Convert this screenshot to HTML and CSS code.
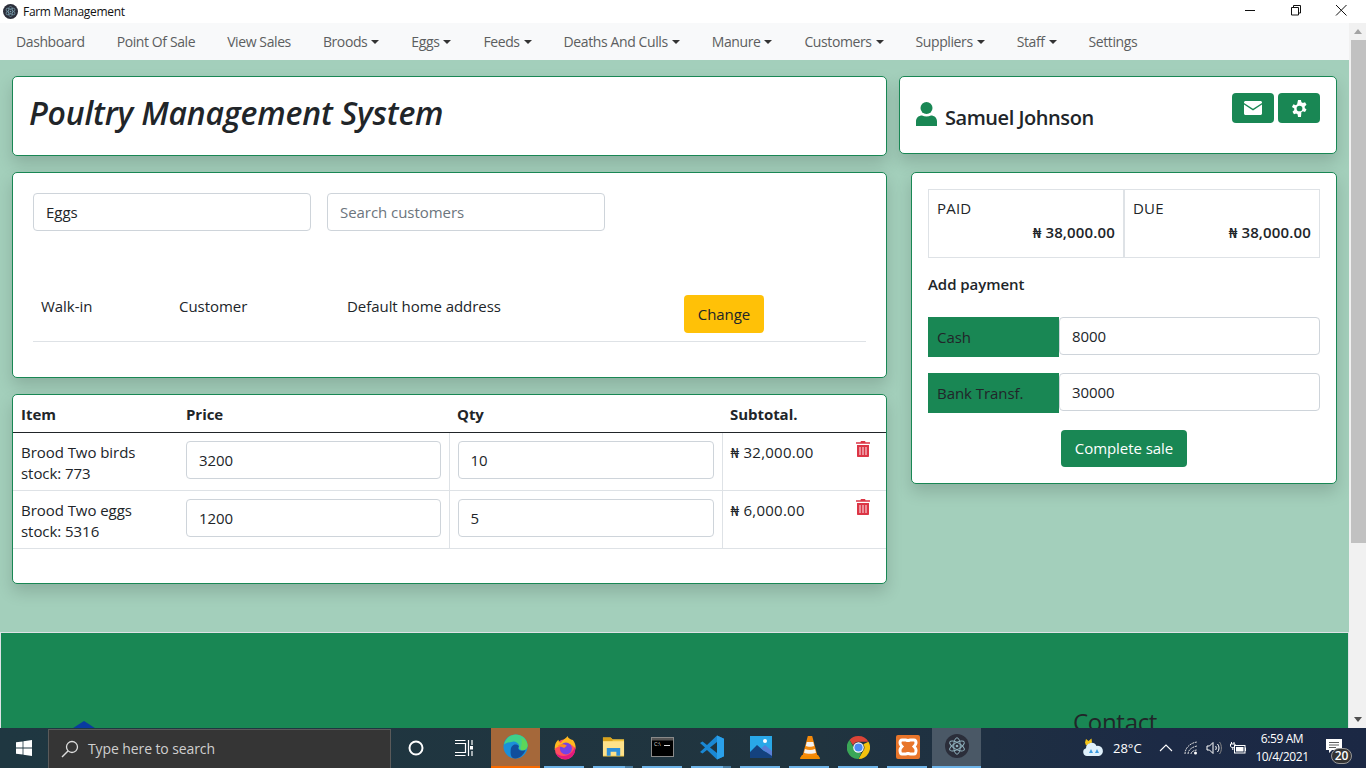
FILE: index.html
```html
<!DOCTYPE html>
<html lang="en">
<head>
    <meta charset="UTF-8">
    <meta name="viewport" content="width=device-width, initial-scale=1.0">
    <title>Farm Management</title>
    <link rel="stylesheet" href="styles.css">
</head>
<body>

    <!-- Window title bar -->
    <div class="titlebar">
        <div class="titlebar-left">
            <svg class="app-icon" viewBox="0 0 32 32">
                <circle cx="16" cy="16" r="16" fill="#2b2e3a"/>
                <g fill="none" stroke="#7fa8b8" stroke-width="1.3">
                    <ellipse cx="16" cy="16" rx="11" ry="4.4" transform="rotate(30 16 16)"/>
                    <ellipse cx="16" cy="16" rx="11" ry="4.4" transform="rotate(90 16 16)"/>
                    <ellipse cx="16" cy="16" rx="11" ry="4.4" transform="rotate(150 16 16)"/>
                </g>
                <circle cx="16" cy="16" r="1.8" fill="#7fa8b8"/>
            </svg>
            <span>Farm Management</span>
        </div>
        <div class="window-controls">
            <svg viewBox="0 0 46 23"><path d="M17 10.500h10" stroke="#111" fill="none"/></svg>
            <svg viewBox="0 0 46 23"><path d="M17.500 7.500h7v7.500h-7zM19.500 7.500v-2h7v7.500h-2" stroke="#111" fill="none"/></svg>
            <svg viewBox="0 0 46 23"><path d="M16 5l10.500 10.500M26.500 5L16 15.500" stroke="#111" fill="none"/></svg>
        </div>
    </div>

    <div class="window-body">
        <div class="page">

            <!-- Navbar -->
            <nav class="navbar">
                <a>Dashboard</a>
                <a>Point Of Sale</a>
                <a>View Sales</a>
                <a class="dropdown">Broods</a>
                <a class="dropdown">Eggs</a>
                <a class="dropdown">Feeds</a>
                <a class="dropdown">Deaths And Culls</a>
                <a class="dropdown">Manure</a>
                <a class="dropdown">Customers</a>
                <a class="dropdown">Suppliers</a>
                <a class="dropdown">Staff</a>
                <a>Settings</a>
            </nav>

            <main class="content">
                <div class="col-left">
                    <div class="card title-card">
                        <h1>Poultry Management System</h1>
                    </div>

                    <!-- Customer -->
                    <div class="card customer-card">
                        <div class="search-row">
                            <input type="text" class="form-control" value="Eggs">
                            <input type="text" class="form-control" placeholder="Search customers">
                        </div>
                        <table class="customer-table">
                            <tr>
                                <td class="c-first">Walk-in</td>
                                <td class="c-last">Customer</td>
                                <td class="c-address">Default home address</td>
                                <td class="c-action"><button class="btn btn-warning">Change</button></td>
                            </tr>
                        </table>
                    </div>

                    <!-- Sale items -->
                    <div class="card items-card">
                        <table class="items-table">
                            <thead>
                                <tr>
                                    <th class="col-item">Item</th>
                                    <th class="col-price">Price</th>
                                    <th class="col-qty">Qty</th>
                                    <th>Subtotal.</th>
                                </tr>
                            </thead>
                            <tbody>
                                <tr>
                                    <td>Brood Two birds<br>stock: 773</td>
                                    <td class="cell-input"><input type="text" class="form-control" value="3200"></td>
                                    <td class="cell-input"><input type="text" class="form-control" value="10"></td>
                                    <td>
                                        <div class="subtotal">
                                            <span>₦ 32,000.00</span>
                                            <svg class="trash" viewBox="0 0 14 16"><use href="#trash-icon"/></svg>
                                        </div>
                                    </td>
                                </tr>
                                <tr>
                                    <td>Brood Two eggs<br>stock: 5316</td>
                                    <td class="cell-input"><input type="text" class="form-control" value="1200"></td>
                                    <td class="cell-input"><input type="text" class="form-control" value="5"></td>
                                    <td>
                                        <div class="subtotal">
                                            <span>₦ 6,000.00</span>
                                            <svg class="trash" viewBox="0 0 14 16"><use href="#trash-icon"/></svg>
                                        </div>
                                    </td>
                                </tr>
                            </tbody>
                        </table>
                    </div>
                </div>

                <div class="col-right">
                    <div class="card profile-card">
                        <div class="profile-name">
                            <svg class="person" viewBox="0 0 21 24">
                                <circle cx="10.500" cy="6" r="6"/>
                                <path d="M0 24v-4.500C0 15.500 3 13.500 6 13.500c1.300.6 2.900 1 4.500 1s3.200-.4 4.500-1c3 0 6 2 6 6V24z"/>
                            </svg>
                            <span>Samuel Johnson</span>
                        </div>
                        <div class="profile-actions">
                            <button class="btn btn-success btn-icon">
                                <svg viewBox="0 0 18 14" width="18" height="14">
                                    <path fill="#fff" d="M1.500 0h15c.8 0 1.500.7 1.500 1.500v.4L9 7.800 0 1.900v-.4C0 .7.700 0 1.500 0z"/>
                                    <path fill="#fff" d="M0 3.500l9 5.900 9-5.900v9c0 .8-.7 1.500-1.500 1.500h-15C.700 14 0 13.300 0 12.500z"/>
                                </svg>
                            </button>
                            <button class="btn btn-success btn-icon">
                                <svg viewBox="0 0 16 16" width="17" height="17">
                                    <path fill="#fff" fill-rule="evenodd" d="M6.600 0h2.800l.4 2.200c.5.200.9.400 1.300.7l2.100-.8 1.400 2.400-1.700 1.500c.1.500.1 1 0 1.500v0l1.700 1.500-1.400 2.400-2.100-.8c-.4.300-.8.500-1.300.7L9.400 16H6.600l-.4-2.700c-.5-.2-.9-.4-1.300-.7l-2.100.8-1.400-2.400 1.700-1.500c-.1-.5-.1-1 0-1.500L.9 6.500l1.400-2.400 2.100.8c.4-.3.8-.5 1.300-.7zM8 5.300a2.700 2.700 0 1 0 0 5.400 2.700 2.700 0 0 0 0-5.400z"/>
                                </svg>
                            </button>
                        </div>
                    </div>

                    <!-- Payment -->
                    <div class="card payment-card">
                        <table class="totals-table">
                            <tr>
                                <td>
                                    <div class="totals-label">PAID</div>
                                    <div class="totals-amount">₦ 38,000.00</div>
                                </td>
                                <td>
                                    <div class="totals-label">DUE</div>
                                    <div class="totals-amount">₦ 38,000.00</div>
                                </td>
                            </tr>
                        </table>
                        <div class="add-payment">Add payment</div>
                        <div class="input-group">
                            <span class="input-label">Cash</span>
                            <input type="text" class="form-control" value="8000">
                        </div>
                        <div class="input-group">
                            <span class="input-label">Bank Transf.</span>
                            <input type="text" class="form-control" value="30000">
                        </div>
                        <div class="complete-row">
                            <button class="btn btn-success">Complete sale</button>
                        </div>
                    </div>
                </div>
            </main>

            <!-- Footer -->
            <footer class="footer">
                <svg class="footer-logo" viewBox="0 0 28 20"><path d="M14 0L28 9v11H0V9z" fill="#0a3aa0"/></svg>
                <h3>Contact</h3>
            </footer>
        </div>

        <!-- Scrollbar -->
        <div class="scrollbar">
            <div class="scroll-btn"><span class="arrow-up"></span></div>
            <div class="scroll-track"><div class="scroll-thumb"></div></div>
            <div class="scroll-btn"><span class="arrow-down"></span></div>
        </div>
    </div>

    <!-- Windows taskbar -->
    <div class="taskbar">
        <div class="start-btn">
            <svg viewBox="0 0 16 16" width="16" height="16"><path fill="#fff" d="M0 2.300l6.600-.9v6.200H0zM7.400 1.300L16 0v7.600H7.400zM0 8.400h6.600v6.200L0 13.700zM7.400 8.400H16V16l-8.600-1.300z"/></svg>
        </div>
        <div class="search-box">
            <svg viewBox="0 0 18 18" width="18" height="18"><circle cx="11" cy="7" r="5.500" fill="none" stroke="#ddd" stroke-width="1.300"/><path d="M7 11l-6 6" stroke="#ddd" stroke-width="1.500"/></svg>
            <span>Type here to search</span>
        </div>
        <div class="task-btn">
            <svg viewBox="0 0 18 18" width="18" height="18"><circle cx="9" cy="9" r="6.500" fill="none" stroke="#fff" stroke-width="2"/></svg>
        </div>
        <div class="task-btn task-view">
            <svg viewBox="0 0 18 18" width="18" height="18"><path d="M0 4.500h10.500v9H0M0 1.500h10.500M0 16.500h10.500M13.500 1v16M17 1v5M17 12v5" fill="none" stroke="#fff" stroke-width="1.200"/><rect x="15" y="7" width="3" height="3.500" fill="#fff"/></svg>
        </div>

        <div class="task-apps">
            <div class="app-tile edge">
                <svg viewBox="0 0 26 26" width="25" height="25">
                    <circle cx="13" cy="13" r="12.500" fill="#1b8fd8"/>
                    <path d="M1 11C3 3 9 .500 13 .500c7 0 12.500 5 12.500 11 0 4-3.500 5.500-6.500 5-3-.5-3-2.500-2-4-1-3-4-5-7-4.500C6 8.500 3 9.500 1 11z" fill="#3fd08a"/>
                    <path d="M19 4c4 2 6.500 5 6.500 8 0 4-3.500 5.500-6.500 5-2-1 2-7 0-13z" fill="#5dd65a"/>
                    <path d="M8 17c0-4 3-7 6-6 1.500.5 2.500 1.500 2.500 2-1.500 2 0 4.500 4 4.500 1 0 2 0 3-1-2 5-6 9-11 9-3 0-5-2-4.500-8.500z" fill="#114e9c"/>
                </svg>
            </div>
            <div class="app-tile running">
                <svg viewBox="0 0 26 26" width="24" height="25">
                    <circle cx="13" cy="15" r="11" fill="#ff4f5e"/>
                    <path d="M2 15C1.500 9 4 6 6 4.500 6 6.500 7 7.500 8.500 8 10 5 14 3 16 .500c0 2.500 3 3.500 5.500 4.500 2 2 3.500 6 3 10-3-6-10-9-23.500 0z" fill="#ffb81f"/>
                    <path d="M24 12c1 6-2 12-8 13.500-5 1-11-1-13.500-7 3 3 8 5 13 3 4-1.500 7-5 8.500-9.500z" fill="#e3197f"/>
                    <circle cx="14" cy="14" r="6.500" fill="#7542e5"/>
                    <path d="M5 11c3-2 7-2 10 0l-3 2.500C10 12 7 12 5 11z" fill="#ff8a1f"/>
                </svg>
            </div>
            <div class="app-tile running split">
                <svg viewBox="0 0 24 20" width="23" height="20">
                    <path d="M1 0h8l2 2h12v18H1z" fill="#f0c33c"/>
                    <path d="M1 0h8l2 2v2H1z" fill="#d9a21b"/>
                    <rect x="1" y="4" width="22" height="15" fill="#ffe28a"/>
                    <path d="M5 19v-8h14v8h-4v-4H9v4z" fill="#2f8fd8"/>
                </svg>
            </div>
            <div class="app-tile running">
                <svg viewBox="0 0 23 20" width="23" height="20">
                    <rect x=".5" y=".5" width="22" height="19" fill="#000" stroke="#8a8a8a"/>
                    <rect x="1" y="1" width="21" height="2.500" fill="#555"/>
                    <text x="3" y="9" class="cmd-text">C:\</text>
                    <rect x="13" y="8" width="6" height="1" fill="#ddd"/>
                </svg>
            </div>
            <div class="app-tile running split">
                <svg viewBox="0 0 24 24" width="24" height="25">
                    <path d="M17 0l7 3.200v17.600L17 24 7 14.500 2.500 18 0 16.500 5 12 0 7.500 2.500 6 7 9.500z" fill="#1a88d4"/>
                    <path d="M17 6.500L10 12l7 5.500z" fill="#1f3540"/>
                    <path d="M17 0l7 3.200v17.600L17 24z" fill="#2aa0ea"/>
                </svg>
            </div>
            <div class="app-tile running">
                <svg viewBox="0 0 22 22" width="22" height="22">
                    <rect width="22" height="22" fill="#29a8e8"/>
                    <path d="M0 16l7-7 7 6 8 3v4H0z" fill="#14427f"/>
                    <path d="M11 12.500l4-3.500 7 6v5z" fill="#5a7fd6"/>
                    <circle cx="15" cy="5" r="2" fill="#fff"/>
                </svg>
            </div>
            <div class="app-tile running">
                <svg viewBox="0 0 20 24" width="20" height="24">
                    <path d="M0 23l2-3h16l2 3c0 .6-.4 1-1 1H1c-.6 0-1-.4-1-1z" fill="#f08a00"/>
                    <path d="M7.800 1h4.400L17.500 21h-15z" fill="#f58a0b"/>
                    <path d="M6.800 7h6.400l1 4c-2 1-6.400 1-8.400 0zM5 14c3 1.200 7 1.200 10 0l1 3.800c-3 1.400-9 1.400-12 0z" fill="#f2f2f2"/>
                </svg>
            </div>
            <div class="app-tile running">
                <svg viewBox="0 0 24 24" width="23" height="23">
                    <path d="M12 0a12 12 0 0 1 10.400 6H12a6 6 0 0 0-5.600 3.800L2.600 4.300A12 12 0 0 1 12 0z" fill="#db4437"/>
                    <path d="M22.400 6A12 12 0 0 1 12 24l5-8.500a6 6 0 0 0 0-7z" fill="#f4c20d"/>
                    <path d="M2.600 4.300l5 8.700A6 6 0 0 0 15 17.400L12 24A12 12 0 0 1 2.600 4.300z" fill="#3aa757"/>
                    <circle cx="12" cy="12" r="5.500" fill="#fff"/>
                    <circle cx="12" cy="12" r="4.300" fill="#4c8bf5"/>
                </svg>
            </div>
            <div class="app-tile running">
                <svg viewBox="0 0 24 24" width="24" height="24">
                    <rect width="24" height="24" rx="2" fill="#e8752a"/>
                    <path d="M6 5h3.500c1.500 0 2.500 1 2.500 2 0-1 1-2 2.500-2H18c1.500 0 2 1.500 2 3s-1 2.500-2 3.500c1 1 2 2 2 3.500s-.5 4-2 4h-3.500c-1.500 0-2.500-1-2.500-2 0 1-1 2-2.500 2H6c-1.500 0-2-2.500-2-4s1-2.500 2-3.500c-1-1-2-2-2-3.500S4.500 5 6 5z" fill="none" stroke="#fff" stroke-width="3"/>
                </svg>
            </div>
            <div class="app-tile active">
                <svg viewBox="0 0 32 32" width="24" height="24">
                    <circle cx="16" cy="16" r="16" fill="#2b2e3a"/>
                    <g fill="none" stroke="#8fb0bc" stroke-width="1.300">
                        <ellipse cx="16" cy="16" rx="11" ry="4.400" transform="rotate(30 16 16)"/>
                        <ellipse cx="16" cy="16" rx="11" ry="4.400" transform="rotate(90 16 16)"/>
                        <ellipse cx="16" cy="16" rx="11" ry="4.400" transform="rotate(150 16 16)"/>
                    </g>
                    <circle cx="16" cy="16" r="1.800" fill="#8fb0bc"/>
                </svg>
            </div>
        </div>

        <!-- System tray -->
        <div class="tray">
            <svg class="tray-weather" viewBox="0 0 22 22" width="22" height="22">
                <path d="M4 2l2.500 2 3-2.500.5 4-6 3-1-3z" fill="#f5c518"/>
                <path d="M5 19a4 4 0 0 1-1-7.800A5.500 5.500 0 0 1 14.500 9 4.500 4.500 0 0 1 17 19z" fill="#dff0fb"/>
                <path d="M9 12l2 4h-4zM15 12l2 4h-4z" fill="#3c9be0"/>
            </svg>
            <span class="tray-temp">28°C</span>
            <svg class="tray-chevron" viewBox="0 0 14 8" width="14" height="8"><path d="M1 7l6-6 6 6" fill="none" stroke="#fff" stroke-width="1.100"/></svg>
            <svg class="tray-wifi" viewBox="0 0 14 14" width="14" height="14"><path d="M1 13C1 7 6 2 13 1M4 13c0-4 4-7 9-8M7 13c0-2 3-4 6-4" fill="none" stroke="#ddd" stroke-dasharray="2 .7"/><circle cx="11.500" cy="12" r="1.500" fill="#fff"/></svg>
            <svg class="tray-sound" viewBox="0 0 16 14" width="16" height="14"><path d="M1 5h2.500L7 1.500v11L3.500 9H1zM9.500 5c1 1 1 3 0 4M11.500 3c2 2 2 6 0 8" fill="none" stroke="#fff"/><path d="M13.500 1c2.500 3 2.500 9 0 12" fill="none" stroke="#888"/></svg>
            <svg class="tray-battery" viewBox="0 0 16 12" width="16" height="12"><path d="M1.500 0v2M4 0v2M.5 2h4.500v2c0 1-1 1.500-2.200 1.500S.5 5 .5 4zM2.800 5.500V8" fill="none" stroke="#fff"/><rect x="4.500" y="3.500" width="10.500" height="7.500" fill="#1c2a45" stroke="#fff"/><rect x="6" y="5" width="7.500" height="4.500" fill="#fff"/><rect x="15" y="5.500" width="1" height="3.500" fill="#fff"/></svg>
            <div class="tray-clock">
                <span>6:59 AM</span>
                <span>10/4/2021</span>
            </div>
            <div class="tray-notify">
                <svg viewBox="0 0 16 15" width="16" height="15"><path fill="#fff" d="M0 0h16v11H6l-3 3v-3H0z"/><path d="M3 3.500h10M3 6h10M3 8.500h7" stroke="#333" stroke-width=".8"/></svg>
                <span class="notify-badge">20</span>
            </div>
        </div>
    </div>

    <svg class="icon-defs" width="0" height="0">
        <symbol id="trash-icon" viewBox="0 0 14 16">
            <path fill="#dc3545" fill-rule="evenodd" d="M4.500 1.200C4.500.5 5 0 5.700 0h2.600c.7 0 1.200.5 1.200 1.200H14v1.600H0V1.200zM1 4h12v11c0 .6-.4 1-1 1H2c-.6 0-1-.4-1-1z"/>
            <path fill="#f0a6ae" d="M3.200 6h1.600v8H3.200zM6.200 6h1.600v8H6.200zM9.200 6h1.600v8H9.200z"/>
        </symbol>
    </svg>

</body>
</html>
```
FILE: styles.css
```css
* {
    box-sizing: border-box;
}

html, body {
    height: 100%;
}

body {
    margin: 0;
    display: flex;
    flex-direction: column;
    overflow: hidden;
    font-family: "Open Sans", "Noto Sans", sans-serif;
    font-size: 15px;
    letter-spacing: -0.05px;
    line-height: 24px;
    color: #212529;
    background-color: #fff;
}

/* Title bar */
.titlebar {
    height: 23px;
    flex: none;
    display: flex;
    justify-content: space-between;
    background-color: #fff;
}

.titlebar-left {
    display: flex;
    align-items: center;
    gap: 5px;
    padding-left: 3px;
    font-size: 12px;
    letter-spacing: -0.3px;
    color: #111;
}

.app-icon {
    width: 15px;
    height: 15px;
}

.window-controls {
    display: flex;
}

.window-controls svg {
    width: 46px;
    height: 23px;
}

/* Window body */
.window-body {
    flex: 1;
    min-height: 0;
    display: flex;
}

.page {
    flex: 1;
    min-width: 0;
    overflow: hidden;
    background-color: #a3cfbb;
}

/* Navbar */
.navbar {
    height: 37px;
    display: flex;
    align-items: center;
    background-color: #f8f9fa;
}

.navbar a {
    padding: 0 16px;
    font-size: 14px;
    letter-spacing: -0.4px;
    color: #5c5e60;
    white-space: nowrap;
}

.dropdown::after {
    content: "";
    display: inline-block;
    margin-left: 4px;
    vertical-align: 3px;
    border-top: 4.800px solid #333;
    border-left: 4.200px solid transparent;
    border-right: 4.200px solid transparent;
}

/* Main layout */
.content {
    display: grid;
    grid-template-columns: 875px 438px;
    gap: 12px;
    padding: 16px 12px 0;
    align-items: start;
}

.col-left {
    display: flex;
    flex-direction: column;
    gap: 16px;
}

.col-right {
    display: flex;
    flex-direction: column;
    gap: 18px;
}

.card {
    background-color: #fff;
    border: 1px solid #198754;
    border-radius: 5px;
    box-shadow: 0 8px 16px rgba(0, 0, 0, 0.15);
}

.title-card {
    height: 80px;
    display: flex;
    align-items: center;
    padding-left: 16px;
}

.title-card h1 {
    margin: 0 0 6px;
    font-size: 32px;
    font-style: italic;
    font-weight: 600;
    letter-spacing: -0.2px;
    line-height: 38px;
}

/* Form controls */
.form-control {
    display: block;
    width: 100%;
    height: 38px;
    padding: 6px 12px;
    border: 1px solid #ced4da;
    border-radius: 4px;
    background-color: #fff;
    font: inherit;
    letter-spacing: inherit;
    color: #212529;
}

.form-control::placeholder {
    color: #6c757d;
}

.btn {
    height: 38px;
    padding: 0 12px;
    border: none;
    border-radius: 4px;
    font: inherit;
    letter-spacing: inherit;
    cursor: pointer;
}

.btn-warning {
    width: 80px;
    background-color: #ffc107;
    color: #212529;
}

.btn-success {
    background-color: #198754;
    color: #fff;
}

/* Customer card */
.customer-card {
    height: 206px;
    padding: 20px;
}

.search-row {
    display: flex;
    gap: 16px;
    margin-bottom: 56px;
}

.search-row .form-control {
    width: 278px;
}

.customer-table {
    width: 100%;
    border-collapse: collapse;
    table-layout: fixed;
}

.customer-table td {
    height: 54px;
    padding: 7px 8px;
    vertical-align: top;
    border-bottom: 1px solid #dee2e6;
}

.customer-table .c-action {
    padding-top: 8px;
    padding-bottom: 7px;
}

.c-first {
    width: 138px;
}

.c-last {
    width: 168px;
}

.c-address {
    width: 337px;
}

/* Items card */
.items-card {
    height: 190px;
}

.items-table {
    width: 100%;
    border-collapse: collapse;
    table-layout: fixed;
}

.items-table th {
    height: 37px;
    padding: 2px 8px 0;
    text-align: left;
    font-weight: 700;
    border-bottom: 1px solid #212529;
}

.items-table td {
    height: 58px;
    padding: 9px 8px 6px;
    vertical-align: top;
    line-height: 21px;
    border-bottom: 1px solid #dee2e6;
    border-left: 1px solid #dee2e6;
}

.items-table td:first-child {
    border-left: none;
}

.items-table td:nth-child(2) {
    border-left: none;
}

.items-table .cell-input {
    padding: 8px;
}

.col-item {
    width: 165px;
}

.col-price {
    width: 271px;
}

.col-qty {
    width: 273px;
}

.subtotal {
    display: flex;
    justify-content: space-between;
    padding-right: 8px;
    letter-spacing: 0.25px;
}

.trash {
    width: 14px;
    height: 16px;
    flex: none;
    margin-top: -1px;
}

.icon-defs {
    position: absolute;
}

/* Profile card */
.profile-card {
    height: 78px;
    display: flex;
    justify-content: space-between;
    padding: 16px;
}

.profile-name {
    display: flex;
    align-items: flex-end;
    gap: 8px;
    height: 37px;
    font-size: 20px;
    font-weight: 600;
    letter-spacing: -0.45px;
}

.person {
    width: 21px;
    height: 24px;
    margin-bottom: 4px;
    fill: #198754;
}

.profile-actions {
    display: flex;
    gap: 4px;
}

.btn-icon {
    width: 42px;
    height: 30px;
    padding: 0;
    display: flex;
    align-items: center;
    justify-content: center;
}

/* Payment card */
.payment-card {
    height: 312px;
    margin-left: 12px;
    padding: 16px;
}

.totals-table {
    width: 100%;
    border-collapse: separate;
    border-spacing: 0;
    table-layout: fixed;
}

.totals-table td {
    height: 69px;
    padding: 6px 8px 0;
    vertical-align: top;
    border: 1px solid #dee2e6;
}

.totals-label {
    font-weight: 500;
    letter-spacing: 0.2px;
}

.totals-amount {
    text-align: right;
    font-weight: 600;
    letter-spacing: 0.15px;
}

.add-payment {
    margin: 14px 0 21px;
    font-weight: 600;
}

.input-group {
    display: flex;
    align-items: flex-start;
    margin-bottom: 16px;
}

.input-label {
    width: 131px;
    height: 40px;
    flex: none;
    padding: 8px 9px 0;
    background-color: #198754;
    color: #212529;
}

.complete-row {
    display: flex;
    justify-content: center;
    margin-top: 17px;
}

.complete-row .btn {
    width: 126px;
    height: 37px;
    padding: 0 0 2px;
}

/* Footer */
.footer {
    height: 200px;
    margin-top: 48px;
    display: flex;
    padding: 74px 0 0 69px;
    border: 1px solid #dee2e6;
    background-color: #198754;
}

.footer-logo {
    width: 28px;
    height: 20px;
    margin-top: 14px;
}

.footer h3 {
    margin: 0 0 0 975px;
    font-size: 24px;
    font-weight: 500;
    letter-spacing: -0.3px;
    line-height: 29px;
    color: #212529;
}

/* Scrollbar */
.scrollbar {
    width: 17px;
    flex: none;
    display: flex;
    flex-direction: column;
    background-color: #f1f1f1;
}

.scroll-btn {
    height: 17px;
    display: flex;
    align-items: center;
    justify-content: center;
}

.arrow-up {
    border-bottom: 5px solid #a3a3a3;
    border-left: 4px solid transparent;
    border-right: 4px solid transparent;
}

.arrow-down {
    border-top: 5px solid #505050;
    border-left: 4px solid transparent;
    border-right: 4px solid transparent;
}

.scroll-track {
    flex: 1;
    padding-left: 2px;
}

.scroll-thumb {
    height: 503px;
    background-color: #c1c1c1;
}

/* Taskbar */
.taskbar {
    height: 40px;
    flex: none;
    display: flex;
    color: #fff;
    background: linear-gradient(90deg, #1f3741 0%, #20343f 60%, #1c2a45 85%, #1b2844 100%);
}

.start-btn {
    width: 48px;
    display: flex;
    align-items: center;
    justify-content: center;
}

.search-box {
    width: 343px;
    margin-top: 1px;
    display: flex;
    align-items: center;
    gap: 9px;
    padding-left: 12px;
    background-color: #353535;
    border: 1px solid #5a5a5a;
    border-bottom: none;
    font-size: 14px;
    letter-spacing: -0.1px;
    color: #cfcfcf;
}

.task-btn {
    width: 50px;
    display: flex;
    align-items: center;
    justify-content: center;
}

.task-view {
    width: 50px;
    padding-right: 5px;
}

.task-apps {
    display: flex;
}

.app-tile {
    position: relative;
    width: 49px;
    display: flex;
    align-items: center;
    justify-content: center;
    padding-bottom: 2px;
}

.edge {
    background-color: #a5683a;
    border-bottom: 2px solid #f76a00;
}

.active {
    background-color: #4a5866;
    border-bottom: 2px solid #6db3e8;
}

.running::after {
    content: "";
    position: absolute;
    left: 4px;
    right: 5px;
    bottom: 0;
    height: 2px;
    background-color: #6db3e8;
}

.split::before {
    content: "";
    position: absolute;
    right: 5px;
    bottom: 0;
    width: 8px;
    height: 2px;
    z-index: 1;
    background-color: #4a7ea3;
}

.cmd-text {
    font-size: 5.500px;
    fill: #ddd;
}

/* System tray */
.tray {
    flex: 1;
    display: flex;
    align-items: center;
    padding-left: 101px;
    font-size: 13px;
}

.tray-temp {
    margin-left: 9px;
    width: 30px;
    letter-spacing: 0;
}

.tray-chevron {
    margin-left: 16px;
}

.tray-wifi {
    margin-left: 11px;
}

.tray-sound {
    margin-left: 8px;
}

.tray-battery {
    margin-left: 8px;
}

.tray-clock {
    width: 70px;
    margin-left: 1px;
    display: flex;
    flex-direction: column;
    align-items: center;
    font-size: 12px;
    line-height: 18px;
    letter-spacing: -0.4px;
}

.tray-notify {
    position: relative;
    margin-left: 9px;
    margin-bottom: 3px;
    line-height: 0;
}

.notify-badge {
    position: absolute;
    left: 5px;
    top: 9px;
    width: 21px;
    height: 16px;
    border-radius: 8px;
    border: 1px solid #999;
    background-color: #333;
    font-size: 12px;
    font-weight: 600;
    line-height: 14px;
    text-align: center;
}
```
